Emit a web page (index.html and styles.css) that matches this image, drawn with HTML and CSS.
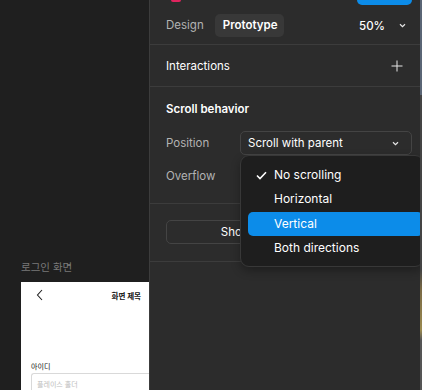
FILE: index.html
```html
<!DOCTYPE html>
<html>
<head>
<meta charset="utf-8">
<link rel="stylesheet" href="styles.css">
</head>
<body>
<div class="app">
  <div class="canvas">
    <div class="frame-label">로그인 화면</div>
    <div class="frame">
      <div class="frame-head">
        <svg class="back" width="8" height="12" viewBox="0 0 8 12"><path d="M6 1 L1.5 6 L6 11" fill="none" stroke="#222" stroke-width="1.1"/></svg>
        <span class="frame-title">화면 제목</span>
      </div>
      <div class="field-label">아이디</div>
      <div class="input">플레이스 홀더</div>
    </div>
  </div>
  <div class="panel">
    <div class="header">
      <div class="avatar"></div>
      <div class="share"></div>
    </div>
    <div class="tabs">
      <span class="tab">Design</span>
      <span class="tab active">Prototype</span>
      <span class="zoom">50%</span>
      <svg class="chev" width="7" height="5" viewBox="0 0 7 5"><path d="M1 1.2 L3.5 3.6 L6 1.2" fill="none" stroke="#e6e6e6" stroke-width="1.2"/></svg>
    </div>
    <div class="section row-between">
      <span class="title">Interactions</span>
      <svg class="plus" width="12" height="12" viewBox="0 0 12 12"><path d="M6 0.5 V11.5 M0.5 6 H11.5" stroke="#e6e6e6" stroke-width="1"/></svg>
    </div>
    <div class="section scroll">
      <div class="title bold">Scroll behavior</div>
      <div class="prop first">
        <span class="label">Position</span>
        <div class="select">
          <span>Scroll with parent</span>
          <svg width="7" height="5" viewBox="0 0 7 5"><path d="M1 1.2 L3.5 3.6 L6 1.2" fill="none" stroke="#e6e6e6" stroke-width="1.2"/></svg>
          <div class="menu">
            <div class="item"><svg class="check" width="11" height="9" viewBox="0 0 11 9"><path d="M1 4.5 L4 7.5 L10 1.2" fill="none" stroke="#fff" stroke-width="1.6"/></svg>No scrolling</div>
            <div class="item">Horizontal</div>
            <div class="item selected">Vertical</div>
            <div class="item">Both directions</div>
          </div>
        </div>
      </div>
      <div class="prop">
        <span class="label">Overflow</span>
      </div>
    </div>
    <div class="section btn-section">
      <div class="btn">Show prototype settings</div>
    </div>
    <div class="rest"></div>
  </div>
  <div class="strip"></div>
</div>
</body>
</html>
```
FILE: styles.css
```css
* { box-sizing: border-box; }
html, body { margin: 0; padding: 0; }
body {
  width: 422px;
  height: 390px;
  overflow: hidden;
  background: #2c2c2c;
  font-family: Inter, "Noto Sans CJK KR", sans-serif;
  font-size: 11.5px;
  color: #fff;
}
.app {
  display: flex;
  height: 390px;
}
.canvas {
  width: 149px;
  flex: none;
  background: #1f1f1f;
  padding: 261px 0 0 21px;
  overflow: hidden;
}
.frame-label {
  color: #7a7a7a;
  font-size: 10.5px;
  line-height: 14px;
  height: 21px;
}
.frame {
  background: #fff;
  height: 120px;
  color: #111;
  padding: 0 0 0 10px;
}
.frame-head {
  display: flex;
  align-items: center;
  justify-content: space-between;
  height: 22px;
  padding: 4px 8px 0 5px;
}
.back { display: block; }
.frame-title {
  font-size: 7.5px;
  font-weight: 700;
}
.field-label {
  margin-top: 58px;
  font-size: 7px;
  line-height: 10px;
  height: 11px;
}
.input {
  border: 1px solid #d9d9d9;
  border-right: none;
  border-radius: 3px 0 0 0;
  height: 20px;
  font-size: 7px;
  color: #bdbdbd;
  padding: 5px 0 0 5px;
}
.panel {
  flex: 1;
  border-left: 1px solid #3c3c3c;
  background: #2c2c2c;
  display: flex;
  flex-direction: column;
  overflow: hidden;
  position: relative;
}
.header {
  height: 6px;
  display: flex;
  align-items: flex-start;
  padding: 0 8px 0 21px;
}
.avatar {
  width: 10px;
  height: 2px;
  background: #e0245e;
  border-radius: 0 0 5px 5px;
}
.share {
  margin-left: auto;
  width: 55px;
  height: 5px;
  background: #0c8ce9;
  border-radius: 0 0 5px 5px;
}
.tabs {
  display: flex;
  align-items: center;
  height: 39px;
  padding: 0 14px 0 8px;
  border-bottom: 1px solid #3c3c3c;
}
.tab {
  color: #b3b3b3;
  padding: 0 8px;
  line-height: 23px;
  border-radius: 5px;
  margin-top: 1px;
}
.tab.active {
  color: #fff;
  font-weight: 600;
  background: #383838;
  margin-left: 3px;
  padding: 0 7px 0 8px;
}
.zoom {
  margin-left: auto;
  font-weight: 500;
  margin-top: 1px;
}
.chev { margin-left: 14px; margin-top: 1px; }
.section {
  border-bottom: 1px solid #3c3c3c;
  padding: 0 16px;
}
.row-between {
  display: flex;
  align-items: center;
  justify-content: space-between;
  height: 42px;
  padding-right: 17px;
}
.title { color: #fff; }
.bold { font-weight: 600; line-height: 16px; }
.scroll {
  padding-top: 14px;
  height: 117px;
}
.prop {
  display: flex;
  align-items: center;
  height: 24px;
  margin-top: 9px;
}
.prop.first { margin-top: 14px; }
.label {
  color: #b3b3b3;
  width: 74px;
}
.select {
  position: relative;
  flex: 1;
  height: 24px;
  border: 1px solid #444;
  border-radius: 5px;
  display: flex;
  align-items: center;
  justify-content: space-between;
  padding: 0 12px 0 7px;
  margin-right: -8px;
}
.menu {
  position: absolute;
  top: 23px;
  left: -1px;
  width: 184px;
  background: #1e1e1e;
  border: 1px solid #383838;
  border-radius: 9px;
  padding: 7px 0 6px 7px;
  box-shadow: 0 4px 10px rgba(0,0,0,0.3);
  z-index: 5;
}
.item {
  position: relative;
  height: 24.3px;
  line-height: 24px;
  padding-left: 26px;
  border-radius: 5px;
  color: #fff;
  font-size: 12px;
}
.item.selected { background: #0c8ce9; }
.check {
  position: absolute;
  left: 8px;
  top: 8px;
}
.btn-section {
  height: 58px;
  padding-top: 16px;
}
.btn {
  height: 24px;
  border: 1px solid #444;
  border-radius: 5px;
  text-align: center;
  line-height: 22px;
  padding-left: 4px;
}
.rest { flex: 1; }
.strip {
  width: 2px;
  flex: none;
  background: linear-gradient(#5a6575 0, #5a6575 95px, #444 95px, #444 270px, #7a6a45 290px, #9a8a50 330px, #555 340px, #555 100%);
}
```
